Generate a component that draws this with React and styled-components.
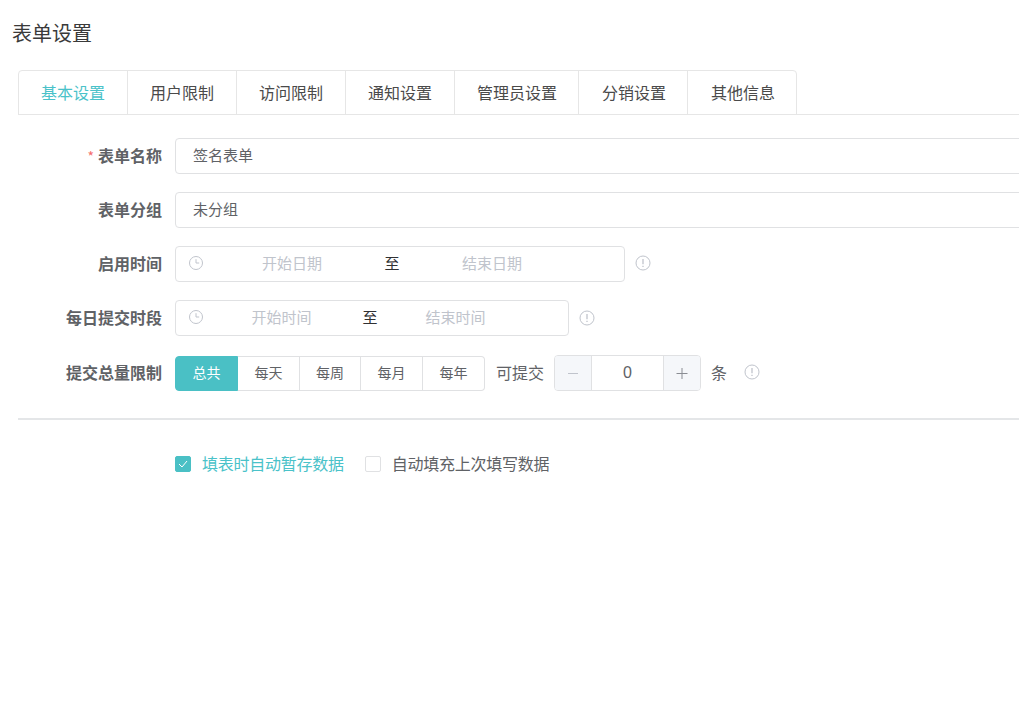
import React from 'react'
import styled, { createGlobalStyle } from 'styled-components'

const GlobalStyle = createGlobalStyle`
  html, body {
    margin: 0;
    padding: 0;
    background: #fff;
    overflow: hidden;
    font-family: "Noto Sans CJK SC", "Liberation Sans", sans-serif;
  }
`

const Page = styled.div`
  width: 1019px;
  height: 717px;
  overflow: hidden;
  box-sizing: border-box;
`

const Heading = styled.h1`
  margin: 0;
  padding: 21px 0 0 12px;
  height: 70px;
  box-sizing: border-box;
  font-size: 20px;
  line-height: 24px;
  font-weight: 400;
  color: #3a3a3a;
`

const Content = styled.div`
  margin-left: 18px;
  width: 1100px;
`

const Tabs = styled.div`
  display: flex;
  height: 45px;
  box-sizing: border-box;
  border-bottom: 1px solid #e6e6e6;
`

const TabList = styled.div`
  display: flex;
  height: 45px;
  box-sizing: border-box;
  border: 1px solid #e6e6e6;
  border-radius: 4px 4px 0 0;
`

const Tab = styled.div`
  padding: 0 ${p => p.$right}px 0 ${p => p.$left}px;
  font-size: 16px;
  line-height: 42px;
  color: ${p => (p.$active ? '#4ac2c9' : '#4a4a4a')};
  border-left: ${p => (p.$first ? 'none' : '1px solid #e6e6e6')};
  white-space: nowrap;
`

const Form = styled.div`
  display: flex;
  flex-direction: column;
  gap: 18px;
  padding-top: 23px;
`

const Row = styled.div`
  display: flex;
  align-items: center;
  height: 36px;
  margin-top: ${p => p.$shift || 0}px;
`

const Label = styled.label`
  width: 144px;
  flex: none;
  margin-right: 13px;
  padding-bottom: 3px;
  text-align: right;
  font-size: 16px;
  font-weight: 700;
  color: #606266;
  white-space: nowrap;
`

const Star = styled.span`
  color: #f56c6c;
  font-weight: 400;
  margin-right: 4px;
  font-size: 14px;
`

const Input = styled.div`
  flex: 1;
  height: 36px;
  box-sizing: border-box;
  border: 1px solid #e0e1e3;
  border-radius: 4px;
  padding: 0 17px;
  font-size: 15px;
  line-height: 31px;
  color: #606266;
`

const Range = styled.div`
  display: flex;
  align-items: center;
  width: ${p => p.$width}px;
  height: 36px;
  box-sizing: border-box;
  border: 1px solid #e0e1e3;
  border-radius: 4px;
  padding-left: 13px;
  font-size: 15px;
  color: #c0c4cc;
`

const RangeIcon = styled.svg`
  width: 14px;
  height: 14px;
  flex: none;
  margin-top: -2px;
`

const RangeText = styled.span`
  width: ${p => p.$width}px;
  flex: none;
  padding-bottom: 3px;
  text-align: center;
`

const RangeTo = styled.span`
  color: #303133;
  width: ${p => p.$width}px;
  flex: none;
  padding-bottom: 3px;
  text-align: center;
`

const Hint = styled.svg`
  width: 16px;
  height: 16px;
  flex: none;
  margin-top: ${p => (p.$level ? 0 : -2)}px;
  margin-left: ${p => p.$gap || 10}px;
`

const Segments = styled.div`
  display: flex;
  height: 35px;
`

const Segment = styled.div`
  width: ${p => p.$width}px;
  box-sizing: border-box;
  font-size: 14px;
  line-height: 31px;
  text-align: center;
  color: ${p => (p.$active ? '#fff' : '#606266')};
  background: ${p => (p.$active ? '#4ac0c5' : '#fff')};
  border: 1px solid ${p => (p.$active ? '#4ac0c5' : '#e0e1e3')};
  border-left-width: ${p => (p.$active ? 1 : 0)}px;
  border-radius: ${p => (p.$active ? '4px 0 0 4px' : p.$last ? '0 4px 4px 0' : '0')};
`

const Text = styled.span`
  font-size: 16px;
  color: #606266;
  margin-left: ${p => p.$gap}px;
  padding-bottom: 3px;
  white-space: nowrap;
`

const Stepper = styled.div`
  display: flex;
  width: 147px;
  height: 36px;
  box-sizing: border-box;
  margin-top: -1px;
  margin-left: 10px;
  border: 1px solid #e0e1e3;
  border-radius: 4px;
  overflow: hidden;
`

const StepButton = styled.div`
  width: 36px;
  flex: none;
  background: #f5f7fa;
  border-${p => p.$side}: 1px solid #e0e1e3;
  color: ${p => (p.$muted ? '#c0c4cc' : '#8a8d93')};
  display: flex;
  align-items: center;
  justify-content: center;
`

const StepValue = styled.div`
  flex: 1;
  text-align: center;
  font-size: 16px;
  line-height: 34px;
  color: #606266;
  font-family: "Liberation Sans", sans-serif;
`

const Divider = styled.hr`
  margin: 27px 0 0;
  height: 2px;
  border: none;
  background: #e4e6e8;
`

const Options = styled.div`
  display: flex;
  align-items: center;
  margin: 34px 0 0 157px;
  height: 20px;
`

const Option = styled.label`
  display: flex;
  align-items: center;
  gap: 11px;
  margin-right: 21px;
  color: ${p => (p.$checked ? '#4ac2c9' : '#606266')};
  white-space: nowrap;
`

const OptionText = styled.span`
  font-size: 16px;
  line-height: 20px;
  letter-spacing: -0.25px;
  padding-bottom: 2px;
`

const Box = styled.span`
  width: 16px;
  height: 16px;
  box-sizing: border-box;
  border-radius: 2px;
  border: 1px solid ${p => (p.$checked ? '#4ac0c5' : '#e0e1e3')};
  background: ${p => (p.$checked ? '#4ac0c5' : '#fff')};
  display: flex;
  align-items: center;
  justify-content: center;
`

const ClockIcon = () => (
  <RangeIcon viewBox="0 0 14 14" fill="none" stroke="#c0c4cc" strokeWidth="1">
    <circle cx="7" cy="7" r="6.5" />
    <path d="M7 3.2V7h3.2" />
  </RangeIcon>
)

const InfoIcon = ({ gap, level }) => (
  <Hint $gap={gap} $level={level} viewBox="0 0 16 16" fill="none" stroke="#c0c4cc" strokeWidth="1">
    <circle cx="8" cy="8" r="7" />
    <path d="M8 4v5.2M8 10.8v1.2" strokeWidth="1.3" />
  </Hint>
)

const tabs = [
  { name: '基本设置', left: 22, right: 22 },
  { name: '用户限制', left: 22, right: 22 },
  { name: '访问限制', left: 22, right: 22 },
  { name: '通知设置', left: 22, right: 22 },
  { name: '管理员设置', left: 22, right: 21 },
  { name: '分销设置', left: 23, right: 21 },
  { name: '其他信息', left: 23, right: 21 },
]
const periods = [
  { name: '总共', width: 63 },
  { name: '每天', width: 62 },
  { name: '每周', width: 61 },
  { name: '每月', width: 62 },
  { name: '每年', width: 62 },
]

export default function App() {
  return (
    <Page>
      <GlobalStyle />
      <Heading>表单设置</Heading>
      <Content>
        <Tabs>
          <TabList>
            {tabs.map((tab, index) => (
              <Tab key={tab.name} $active={index === 0} $first={index === 0} $left={tab.left} $right={tab.right}>
                {tab.name}
              </Tab>
            ))}
          </TabList>
        </Tabs>

        <Form>
          <Row>
            <Label><Star>*</Star>表单名称</Label>
            <Input>签名表单</Input>
          </Row>
          <Row>
            <Label>表单分组</Label>
            <Input>未分组</Input>
          </Row>
          <Row>
            <Label>启用时间</Label>
            <Range $width={450}>
              <ClockIcon />
              <RangeText $width={178}>开始日期</RangeText>
              <RangeTo $width={22}>至</RangeTo>
              <RangeText $width={178}>结束日期</RangeText>
            </Range>
            <InfoIcon />
          </Row>
          <Row>
            <Label>每日提交时段</Label>
            <Range $width={394}>
              <ClockIcon />
              <RangeText $width={157}>开始时间</RangeText>
              <RangeTo $width={20}>至</RangeTo>
              <RangeText $width={151}>结束时间</RangeText>
            </Range>
            <InfoIcon level />
          </Row>
          <Row $shift={1}>
            <Label>提交总量限制</Label>
            <Segments>
              {periods.map((period, index) => (
                <Segment
                  key={period.name}
                  $width={period.width}
                  $active={index === 0}
                  $last={index === periods.length - 1}
                >
                  {period.name}
                </Segment>
              ))}
            </Segments>
            <Text $gap={11}>可提交</Text>
            <Stepper>
              <StepButton $side="right" $muted>
                <svg width="12" height="12" viewBox="0 0 12 12" stroke="currentColor" strokeWidth="1"><path d="M1 6.5h10" /></svg>
              </StepButton>
              <StepValue>0</StepValue>
              <StepButton $side="left">
                <svg width="12" height="12" viewBox="0 0 12 12" stroke="currentColor" strokeWidth="1"><path d="M0.5 6.5h11M6 1v11" /></svg>
              </StepButton>
            </Stepper>
            <Text $gap={10}>条</Text>
            <InfoIcon gap={17} />
          </Row>
        </Form>

        <Divider />

        <Options>
          <Option $checked>
            <Box $checked>
              <svg width="10" height="8" viewBox="0 0 10 8" fill="none" stroke="#fff" strokeWidth="1"><path d="M1 4l3 3 5-6" /></svg>
            </Box>
            <OptionText>填表时自动暂存数据</OptionText>
          </Option>
          <Option>
            <Box />
            <OptionText>自动填充上次填写数据</OptionText>
          </Option>
        </Options>
      </Content>
    </Page>
  )
}
